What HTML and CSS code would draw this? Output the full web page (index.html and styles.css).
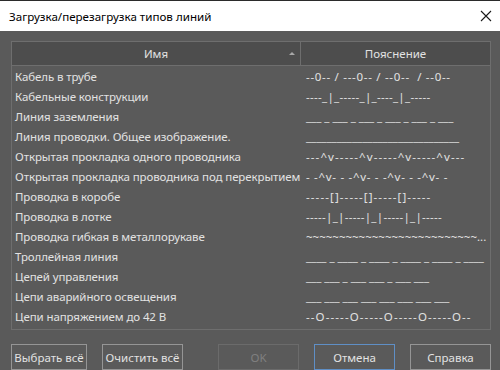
FILE: index.html
```html
<!DOCTYPE html>
<html lang="ru">

<head>
    <meta charset="UTF-8">
    <title>Загрузка/перезагрузка типов линий</title>
    <link rel="stylesheet" href="styles.css">
</head>

<body>
    <div class="dialog">
        <!-- Window title -->
        <div class="titlebar">
            <span class="title">Загрузка/перезагрузка типов линий</span>
            <svg class="close" width="12" height="12" viewBox="0 0 12 12">
                <path d="M1 1 L11 11 M11 1 L1 11" stroke="#1a1a1a" stroke-width="1.1" fill="none" />
            </svg>
        </div>

        <div class="content">
            <div class="table">
                <div class="thead">
                    <div class="th name">Имя<span class="sort"></span></div>
                    <div class="th">Пояснение</div>
                </div>
                <div class="tbody">
                    <div class="row"><span>Кабель в трубе</span><span class="s2">--0-- / ---0-- / --0--&nbsp; / --0--</span></div>
                    <div class="row"><span>Кабельные конструкции</span><span class="s1">----_|_-----_|_----_|_-----</span></div>
                    <div class="row"><span>Линия заземления</span><span>___ _ ___ _ ___ _ ___ _ ___ _ ___</span></div>
                    <div class="row"><span>Линия проводки. Общее изображение.</span><span>______________________________</span></div>
                    <div class="row"><span>Открытая прокладка одного проводника</span><span class="s3">---^v-----^v-----^v-----^v---</span></div>
                    <div class="row"><span>Открытая прокладка проводника под перекрытием</span><span class="s2">- -^v- - -^v- - -^v- - -^v- -</span></div>
                    <div class="row"><span>Проводка в коробе</span><span class="s3">-----[]-----[]-----[]-----</span></div>
                    <div class="row"><span>Проводка в лотке</span><span class="s1">-----|_|-----|_|-----|_|-----</span></div>
                    <div class="row"><span>Проводка гибкая в металлорукаве</span><span class="cut">~~~~~~~~~~~~~~~~~~~~~~~~~~...</span></div>
                    <div class="row"><span>Троллейная линия</span><span>____ _ ____ _ ____ _ ____ _ ____ _ ____</span></div>
                    <div class="row"><span>Цепей управления</span><span>___ ___ _ ___ ___ _ ___ ___</span></div>
                    <div class="row"><span>Цепи аварийного освещения</span><span>___ ___ ___ ___ ___ ___ ___ ___</span></div>
                    <div class="row"><span>Цепи напряжением до 42 В</span><span class="s3">--O-----O-----O-----O-----O--</span></div>
                </div>
            </div>

            <div class="buttons">
                <div class="group">
                    <button class="btn select">Выбрать всё</button>
                    <button class="btn">Очистить всё</button>
                </div>
                <div class="group">
                    <button class="btn disabled">OK</button>
                    <button class="btn focus">Отмена</button>
                    <button class="btn">Справка</button>
                </div>
            </div>
        </div>
    </div>
</body>

</html>
```

FILE: styles.css
```css
html,
body {
    margin: 0;
    padding: 0;
}

body {
    width: 500px;
    height: 370px;
    overflow: hidden;
    background-color: #5a5a5a;
    font-family: 'Noto Sans', 'Open Sans', sans-serif;
    font-size: 11.5px;
    color: #e2e2e2;
}

.dialog {
    display: flex;
    flex-direction: column;
    height: 370px;
}

.titlebar {
    height: 31px;
    background-color: #ffffff;
    border-top: 1px solid #2b2b2b;
    box-sizing: border-box;
    display: flex;
    align-items: center;
    justify-content: space-between;
    padding: 0 8px 0 9px;
}

.title {
    color: #000000;
    font-size: 11.6px;
}

.close {
    display: block;
}

.content {
    flex-grow: 1;
    padding: 10px 9px 0 11px;
    border-left: 3px solid #474747;
    margin-left: -3px;
}

/* list of line types */
.table {
    border: 1px solid #6e6e6e;
}

.thead {
    display: grid;
    grid-template-columns: 289px 1fr;
    height: 23px;
    background-color: #4d4d4d;
    border-bottom: 1px solid #6e6e6e;
}

.th {
    display: flex;
    align-items: center;
    justify-content: center;
    position: relative;
}

.name {
    border-right: 1px solid #6e6e6e;
}

.sort {
    position: absolute;
    right: 5px;
    top: 10px;
    width: 0;
    height: 0;
    border-left: 3px solid transparent;
    border-right: 3px solid transparent;
    border-bottom: 3px solid #a8a8a8;
}

.tbody {
    height: 263px;
}

.row {
    display: grid;
    grid-template-columns: 290px 1fr;
    height: 20px;
    align-items: center;
}

.row span {
    white-space: nowrap;
    overflow: hidden;
}

.row span:first-child {
    padding-left: 3px;
    letter-spacing: -0.1px;
}

.row span:last-child {
    padding-left: 4px;
}

/* dashes are narrower than in the original font */
.s1 {
    letter-spacing: 0.3px;
}

.s2 {
    letter-spacing: 0.7px;
}

.s3 {
    letter-spacing: 1.1px;
}

.cut {
    text-overflow: ellipsis;
}

.buttons {
    display: flex;
    justify-content: space-between;
    margin-top: 14px;
}

.group {
    display: flex;
    gap: 15px;
}

.btn {
    height: 26px;
    width: 81px;
    box-sizing: border-box;
    background-color: transparent;
    border: 1px solid #959595;
    color: #e2e2e2;
    font-family: inherit;
    font-size: 11.5px;
    padding: 0;
}

.select {
    width: 76px;
}

.disabled {
    border-color: #6b6b6b;
    color: #808080;
}

.focus {
    border-color: #5f8fc6;
}
```
